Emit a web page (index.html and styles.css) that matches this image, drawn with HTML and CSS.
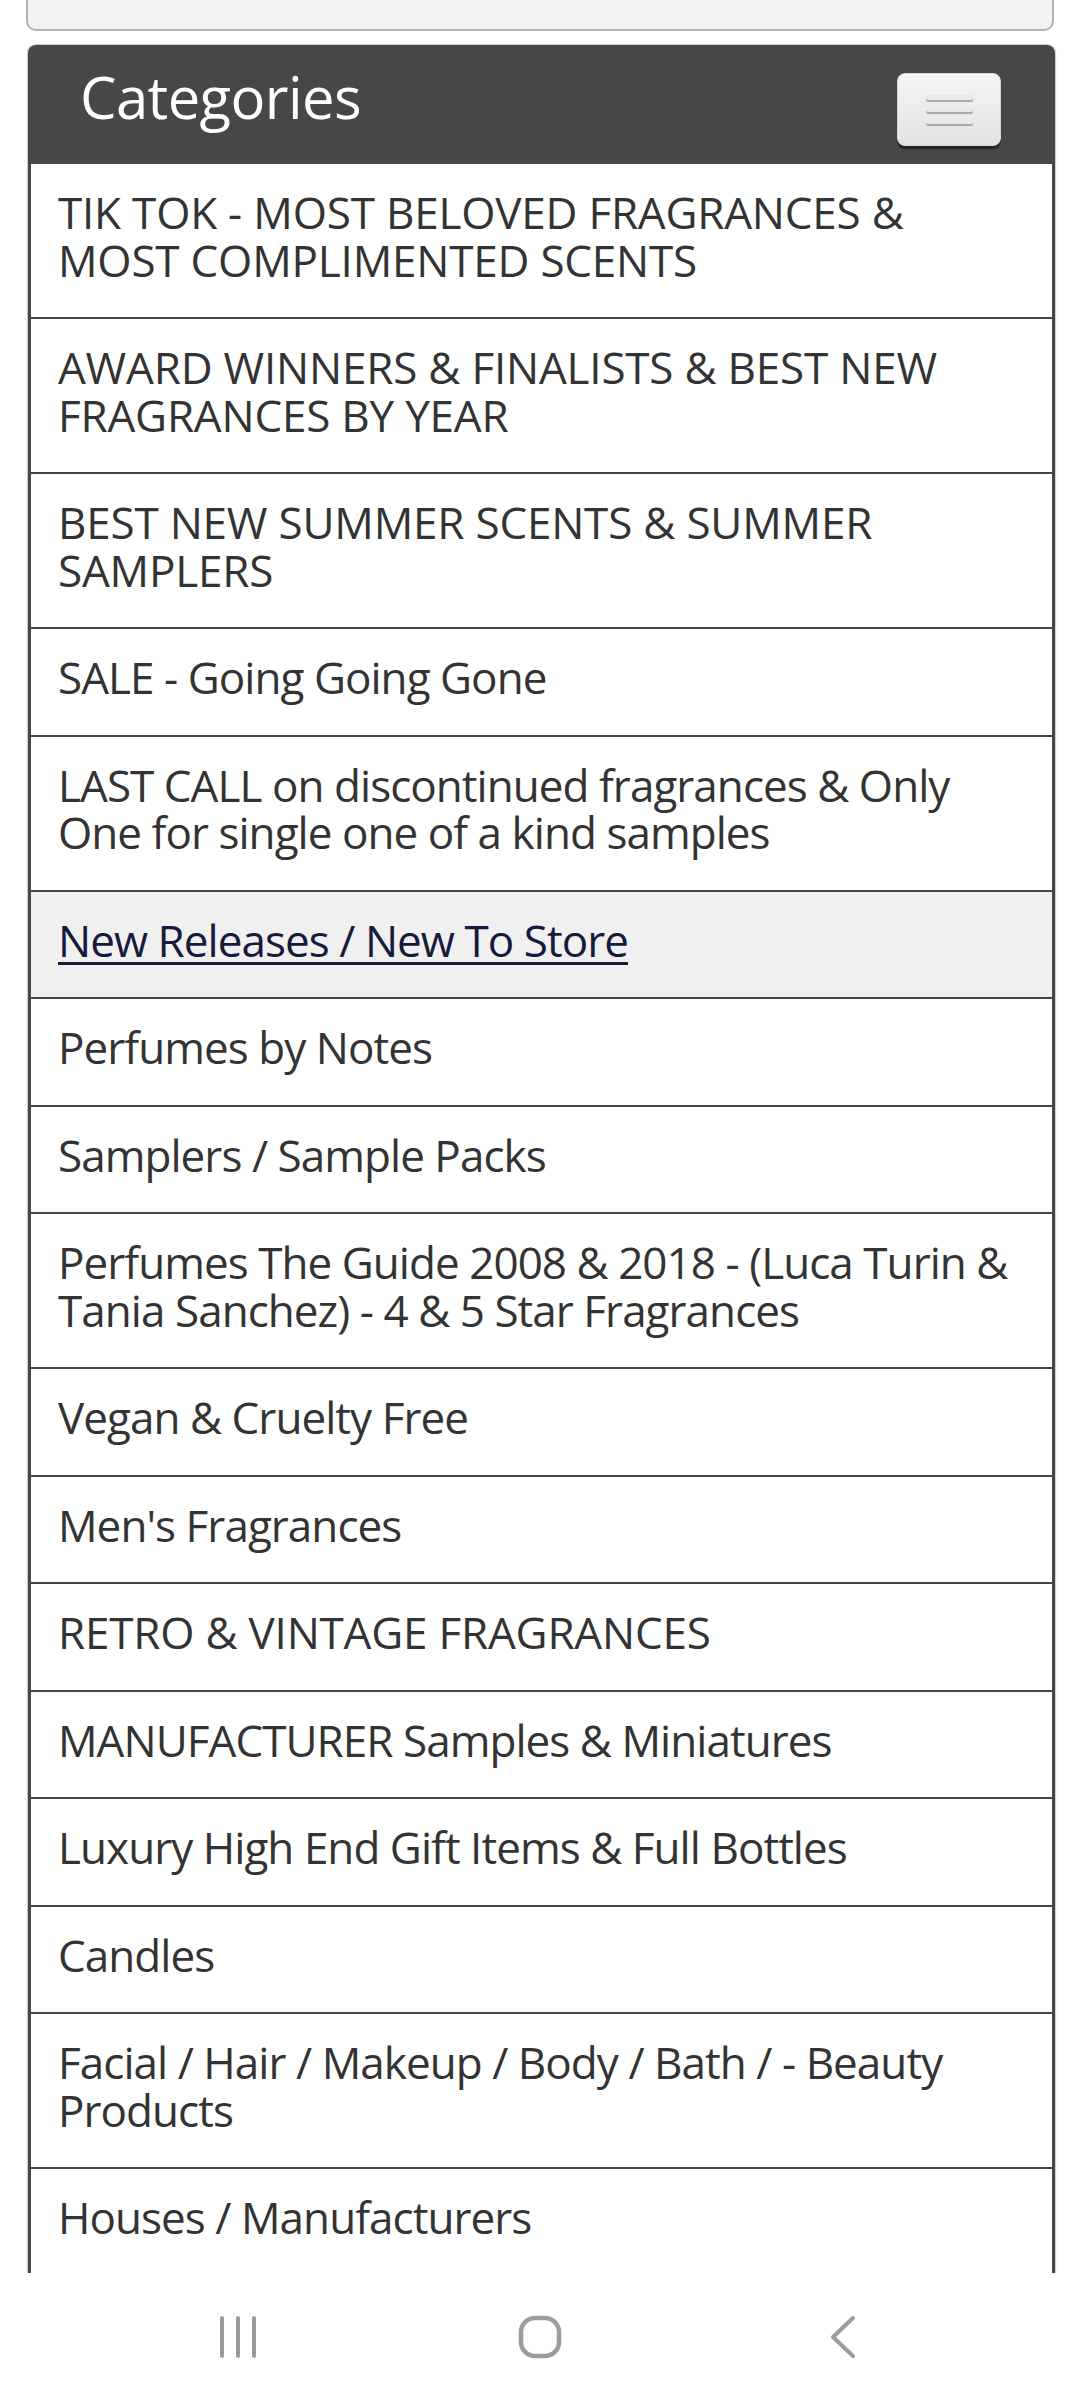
FILE: index.html
```html
<!DOCTYPE html>
<html lang="en">
<head>
<meta charset="utf-8">
<title>Categories</title>
<link rel="stylesheet" href="styles.css">
</head>
<body>
<main class="page">
  <div class="topbox"></div>
  <section class="panel">
    <header class="panel-head">
      <h2 class="panel-title">Categories</h2>
      <button class="menu-btn" type="button" aria-label="Toggle categories">
        <span class="bar"></span><span class="bar"></span><span class="bar"></span>
      </button>
    </header>
    <ul class="cat-list">
      <li class="cat cat-caps">TIK TOK - MOST BELOVED FRAGRANCES &amp; MOST COMPLIMENTED SCENTS</li>
      <li class="cat cat-caps">AWARD WINNERS &amp; FINALISTS &amp; BEST NEW FRAGRANCES BY YEAR</li>
      <li class="cat cat-caps">BEST NEW SUMMER SCENTS &amp; SUMMER SAMPLERS</li>
      <li class="cat">SALE - Going Going Gone</li>
      <li class="cat">LAST CALL on discontinued fragrances &amp; Only One for single one of a kind samples</li>
      <li class="cat cat-active"><a class="cat-link" href="#">New Releases / New To Store</a></li>
      <li class="cat">Perfumes by Notes</li>
      <li class="cat">Samplers / Sample Packs</li>
      <li class="cat">Perfumes The Guide 2008 &amp; 2018 - (Luca Turin &amp; Tania Sanchez) - 4 &amp; 5 Star Fragrances</li>
      <li class="cat">Vegan &amp; Cruelty Free</li>
      <li class="cat">Men's Fragrances</li>
      <li class="cat cat-caps">RETRO &amp; VINTAGE FRAGRANCES</li>
      <li class="cat">MANUFACTURER Samples &amp; Miniatures</li>
      <li class="cat">Luxury High End Gift Items &amp; Full Bottles</li>
      <li class="cat">Candles</li>
      <li class="cat">Facial / Hair / Makeup / Body / Bath / - Beauty Products</li>
      <li class="cat">Houses / Manufacturers</li>
    </ul>
  </section>
</main>
<nav class="navbar">
  <span class="nav-slot">
    <svg width="60" height="60" viewBox="0 0 60 60" fill="none" stroke="#9c9c9c" stroke-width="4" stroke-linecap="round">
      <line x1="14" y1="11" x2="14" y2="49"/>
      <line x1="30" y1="11" x2="30" y2="49"/>
      <line x1="46" y1="11" x2="46" y2="49"/>
    </svg>
  </span>
  <span class="nav-slot">
    <svg width="60" height="60" viewBox="0 0 60 60" fill="none" stroke="#9c9c9c" stroke-width="4.5">
      <rect x="11" y="11" width="38" height="38" rx="14"/>
    </svg>
  </span>
  <span class="nav-slot">
    <svg width="60" height="60" viewBox="0 0 60 60" fill="none" stroke="#9c9c9c" stroke-width="4" stroke-linecap="round" stroke-linejoin="round">
      <polyline points="41,11 21,30 41,49"/>
    </svg>
  </span>
</nav>
</body>
</html>
```
FILE: styles.css
```css
html, body {
  margin: 0;
  padding: 0;
}
body {
  width: 1080px;
  height: 2400px;
  display: flex;
  flex-direction: column;
  overflow: hidden;
  background: #ffffff;
  font-family: "Open Sans", "Noto Sans", sans-serif;
}
.page {
  flex: 1;
  min-height: 0;
  overflow: hidden;
  padding: 0 25px 0 28px;
}
.topbox {
  height: 41px;
  margin: -14px 1px 0 -2px;
  background: #f2f2f2;
  border: 2px solid #b2b2b2;
  border-radius: 10px;
}
.panel {
  margin-top: 14px;
  border-radius: 8px 8px 0 0;
  box-shadow: 0 0 1px 1px rgba(0, 0, 0, 0.22);
}
.panel-head {
  height: 119px;
  box-sizing: border-box;
  display: flex;
  justify-content: space-between;
  align-items: flex-start;
  padding: 0 54px 0 52px;
  background: #474747;
  border-radius: 8px 8px 0 0;
}
.panel-title {
  margin: 23px 0 0;
  font-size: 58px;
  line-height: 58px;
  font-weight: 400;
  letter-spacing: -0.6px;
  color: #ffffff;
}
.menu-btn {
  margin-top: 28px;
  width: 104px;
  height: 73px;
  padding: 0;
  border: 1px solid #d8d8d8;
  border-radius: 8px;
  background: linear-gradient(#f5f5f5, #e3e3e3);
  box-shadow: 0 3px 1px rgba(0, 0, 0, 0.5);
  display: flex;
  flex-direction: column;
  align-items: center;
  justify-content: center;
  gap: 7px;
}
.bar {
  display: block;
  width: 47px;
  height: 5px;
  border-radius: 3px;
  background: #e9e9e9;
  box-shadow: 0 2px 1px #a8a8a8;
}
.cat-list {
  list-style: none;
  margin: 0;
  padding: 0;
  border-left: 3px solid #474747;
  border-right: 3px solid #474747;
}
.cat {
  padding: 25px 27px 33px;
  border-bottom: 2px solid #444444;
  font-size: 44px;
  font-weight: 370;
  line-height: 47.5px;
  letter-spacing: -0.95px;
  color: #333333;
  background: #ffffff;
}
.cat-caps {
  letter-spacing: -0.2px;
}
.cat-active {
  background: #f0f0f0;
}
.cat-link {
  color: #171a3c;
  text-decoration: underline;
  text-decoration-thickness: 3px;
  text-underline-offset: 5px;
}
.navbar {
  height: 127px;
  flex: 0 0 127px;
  background: #ffffff;
  display: flex;
  justify-content: center;
  align-items: center;
  gap: 242px;
}
.nav-slot {
  width: 60px;
  height: 60px;
  display: flex;
}
```
